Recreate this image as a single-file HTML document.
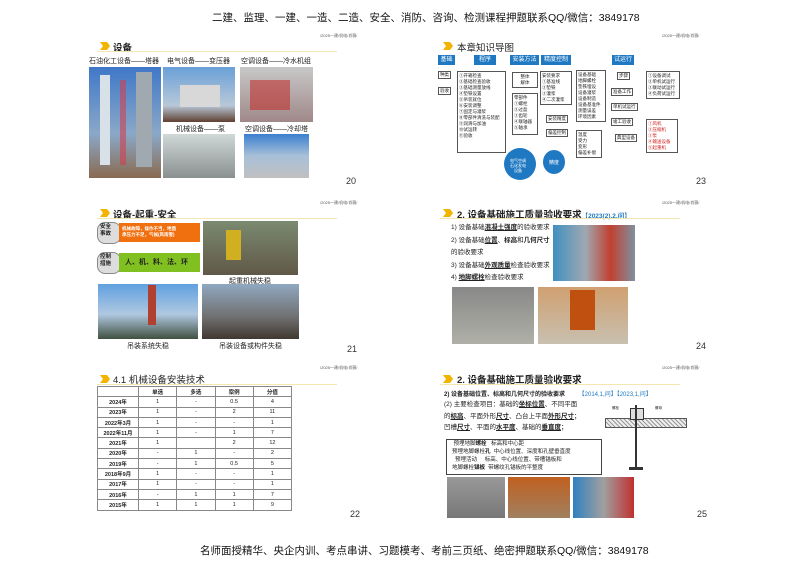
<!DOCTYPE html><html><head><meta charset="utf-8"><style>
body{margin:0;width:800px;height:566px;background:#fff;position:relative;overflow:hidden;font-family:"Liberation Sans","Noto Sans CJK SC",sans-serif;color:#222}
.a{position:absolute;white-space:nowrap}
.hd{font-size:4px;color:#555}
.t{font-size:9.5px;font-weight:bold;color:#222}
.chev{position:absolute;width:11px;height:8px}
.ln{position:absolute;height:1px;background:#f3e6b0}
.pg{font-size:9px;color:#333}
.ph{position:absolute}
.cap{font-size:7px;color:#222}
.bx{position:absolute;background:#1e78c2;color:#fff;font-size:6px;text-align:center;line-height:10px}
.sm{font-size:4.5px;line-height:6px}
table{border-collapse:collapse;font-size:5.5px}
td{border:1px solid #888;text-align:center;height:9.3px;padding:0}
td:first-child{font-weight:bold}
.s{font-size:6.5px;line-height:12.5px}
</style></head><body>
<svg width="0" height="0" style="position:absolute"><defs><g id="cv"><path d="M0 0L4 0L7 4L4 8L0 8L3 4Z M4 0L7 0L10 4L7 8L4 8L7 4Z" fill="#f2b400"/></g></defs></svg>
<div class="a" style="left:212px;top:10px;font-size:10.5px;color:#111">二建、监理、一建、一造、二造、安全、消防、咨询、检测课程押题联系QQ/微信：3849178</div>
<div class="a" style="left:200px;top:543px;font-size:10.5px;color:#111">名师面授精华、央企内训、考点串讲、习题模考、考前三页纸、绝密押题联系QQ/微信：3849178</div>

<!-- slide 20 -->
<div class="a hd" style="left:320px;top:33px">/2025一建/机电/肖薇/</div>
<svg class="chev" style="left:100px;top:42px" viewBox="0 0 11 8"><use href="#cv"/></svg>
<div class="a t" style="left:113px;top:40px">设备</div>
<div class="ln" style="left:97px;top:51px;width:240px"></div>
<div class="a cap" style="left:89px;top:56px">石油化工设备——塔器</div>
<div class="a cap" style="left:167px;top:56px">电气设备——变压器</div>
<div class="a cap" style="left:241px;top:56px">空调设备——冷水机组</div>
<div class="ph" style="left:89px;top:67px;width:72px;height:111px;background:linear-gradient(#3f78c8,#8aa8c8 60%,#8a6a50)"></div>
<div class="ph" style="left:100px;top:75px;width:10px;height:90px;background:#d8e0e8"></div>
<div class="ph" style="left:136px;top:72px;width:16px;height:95px;background:#a0a8b0"></div>
<div class="ph" style="left:120px;top:80px;width:6px;height:85px;background:#d04050;opacity:.6"></div>
<div class="ph" style="left:163px;top:67px;width:72px;height:55px;background:linear-gradient(#6aa0d8,#b8c8d8 70%,#604030)"></div>
<div class="ph" style="left:180px;top:85px;width:40px;height:22px;background:#d8d8d8"></div>
<div class="ph" style="left:240px;top:67px;width:73px;height:55px;background:linear-gradient(#c8c8c8,#a08888)"></div>
<div class="ph" style="left:250px;top:80px;width:40px;height:30px;background:#c03030;opacity:.6"></div>
<div class="a cap" style="left:176px;top:124px">机械设备——泵</div>
<div class="a cap" style="left:245px;top:124px">空调设备——冷却塔</div>
<div class="ph" style="left:163px;top:134px;width:72px;height:44px;background:linear-gradient(#d0d8d8,#8a9090)"></div>
<div class="ph" style="left:244px;top:134px;width:65px;height:44px;background:linear-gradient(#3a80d0,#a8c0d8 50%,#c0c0c0)"></div>
<div class="a pg" style="left:346px;top:176px">20</div>

<!-- slide 23 -->
<div class="a hd" style="left:662px;top:33px">/2025一建/机电/肖薇/</div>
<svg class="chev" style="left:443px;top:42px" viewBox="0 0 11 8"><use href="#cv"/></svg>
<div class="a t" style="left:457px;top:40px;font-weight:normal">本章知识导图</div>
<div class="bx" style="left:438px;top:55px;width:17px">基础</div>
<div class="bx" style="left:474px;top:55px;width:22px">程序</div>
<div class="bx" style="left:510px;top:55px;width:29px">安装方法</div>
<div class="bx" style="left:541px;top:55px;width:30px">精度控制</div>
<div class="bx" style="left:612px;top:55px;width:22px">试运行</div>
<div class="a sm" style="left:438px;top:71px;border:1px solid #555;padding:0 1px">种类</div>
<div class="a sm" style="left:438px;top:87px;border:1px solid #555;padding:0 1px">验收</div>
<div class="a sm" style="left:457px;top:71px;border:1px solid #555;padding:1px;width:45px;height:78px;white-space:normal">①开箱检查<br>②基础检查验收<br>③基础测量放线<br>④垫铁设置<br>⑤吊装就位<br>⑥安装调整<br>⑦固定与灌浆<br>⑧零部件清洗与装配<br>⑨润滑与加油<br>⑩试运转<br>⑪验收</div>
<div class="a sm" style="left:512px;top:72px;border:1px solid #555;padding:1px;width:22px;text-align:center">整体<br>解体</div>
<div class="a sm" style="left:512px;top:93px;border:1px solid #555;padding:1px;width:22px;height:38px">零部件<br>①螺栓<br>②过盈<br>③齿轮<br>④联轴器<br>⑤轴承</div>
<div class="a sm" style="left:540px;top:71px;border:1px solid #555;padding:1px;width:28px">安装要求<br>①基准线<br>②垫铁<br>③灌浆<br>④二次灌浆</div>
<div class="a sm" style="left:546px;top:115px;border:1px solid #555;padding:0 1px">安装精度</div>
<div class="a sm" style="left:546px;top:129px;border:1px solid #555;padding:0 1px">偏差控制</div>
<div class="a sm" style="left:576px;top:70px;border:1px solid #555;padding:1px;width:26px">设备基础<br>地脚螺栓<br>垫铁埋设<br>设备灌浆<br>设备制造<br>设备基准件<br>测量误差<br>环境因素</div>
<div class="a sm" style="left:576px;top:130px;border:1px solid #555;padding:1px;width:22px">温度<br>受力<br>变形<br>偏差补偿</div>
<div class="a sm" style="left:617px;top:72px;border:1px solid #555;padding:0 1px">步骤</div>
<div class="a sm" style="left:611px;top:88px;border:1px solid #555;padding:0 1px">准备工作</div>
<div class="a sm" style="left:611px;top:103px;border:1px solid #555;padding:0 1px">单机试运行</div>
<div class="a sm" style="left:611px;top:118px;border:1px solid #555;padding:0 1px">竣工验收</div>
<div class="a sm" style="left:615px;top:134px;border:1px solid #555;padding:0 1px">典型设备</div>
<div class="a sm" style="left:646px;top:71px;border:1px solid #555;padding:1px;width:30px">①设备调试<br>②单机试运行<br>③联动试运行<br>④负荷试运行</div>
<div class="a sm" style="left:646px;top:119px;border:1px solid #555;padding:1px;width:28px;color:#d02020">①风机<br>②压缩机<br>③泵<br>④输送设备<br>⑤起重机</div>
<div class="ph" style="left:504px;top:148px;width:32px;height:32px;border-radius:50%;background:#1e78c2"></div>
<div class="ph" style="left:543px;top:150px;width:22px;height:24px;border-radius:50%;background:#1e78c2"></div>
<div class="a" style="left:510px;top:158px;font-size:4px;color:#fff;line-height:5px;text-align:center">电气空调<br>石化发电<br>设备</div>
<div class="a" style="left:549px;top:159px;font-size:5px;color:#fff">精度</div>
<div class="a pg" style="left:696px;top:176px">23</div>

<!-- slide 21 -->
<div class="a hd" style="left:320px;top:200px">/2025一建/机电/肖薇/</div>
<svg class="chev" style="left:100px;top:209px" viewBox="0 0 11 8"><use href="#cv"/></svg>
<div class="a t" style="left:113px;top:207px">设备-起重-安全</div>
<div class="ln" style="left:97px;top:218px;width:240px"></div>
<div class="ph" style="left:97px;top:222px;width:22px;height:20px;border-radius:8px;background:#ddd;border:1px solid #888"></div>
<div class="a" style="left:100px;top:224px;font-size:5.5px;font-weight:bold;line-height:7px">安全<br>事故</div>
<div class="ph" style="left:119px;top:223px;width:81px;height:19px;background:#f07010"></div>
<div class="a" style="left:122px;top:226px;font-size:4.5px;color:#fff;line-height:6px;font-weight:bold">机械故障，操作不当，地面<br>承压力不足，气候(风雨雪)</div>
<div class="ph" style="left:97px;top:252px;width:22px;height:20px;border-radius:8px;background:#ddd;border:1px solid #888"></div>
<div class="a" style="left:100px;top:254px;font-size:5.5px;font-weight:bold;line-height:7px">控制<br>措施</div>
<div class="ph" style="left:119px;top:253px;width:81px;height:19px;background:#80c020"></div>
<div class="a" style="left:125px;top:257px;font-size:7px;font-weight:bold">人、机、料、法、环</div>
<div class="ph" style="left:203px;top:221px;width:95px;height:54px;background:linear-gradient(#7a8a70,#605848)"></div>
<div class="ph" style="left:226px;top:230px;width:15px;height:30px;background:#d0b020"></div>
<div class="a cap" style="left:229px;top:276px">起重机械失稳</div>
<div class="ph" style="left:98px;top:284px;width:100px;height:55px;background:linear-gradient(#60a0e0,#b0c8e0 55%,#405040)"></div>
<div class="ph" style="left:148px;top:285px;width:8px;height:40px;background:#b04030"></div>
<div class="ph" style="left:202px;top:284px;width:97px;height:55px;background:linear-gradient(#90a8c0,#707070 60%,#403830)"></div>
<div class="a cap" style="left:127px;top:341px">吊装系统失稳</div>
<div class="a cap" style="left:219px;top:341px">吊装设备或构件失稳</div>
<div class="a pg" style="left:347px;top:344px">21</div>

<!-- slide 24 -->
<div class="a hd" style="left:662px;top:200px">/2025一建/机电/肖薇/</div>
<svg class="chev" style="left:443px;top:209px" viewBox="0 0 11 8"><use href="#cv"/></svg>
<div class="a t" style="left:457px;top:207px">2. 设备基础施工质量验收要求<span style="color:#1e78c2;font-size:6.5px">【2023(2),2,问】</span></div>
<div class="ln" style="left:440px;top:218px;width:240px"></div>
<div class="a s" style="left:451px;top:222px">1) 设备基础<b><u>混凝土强度</u></b>的验收要求<br>2) 设备基础<b><u>位置</u></b>、<b>标高</b>和<b>几何尺寸</b><br>的验收要求<br>3) 设备基础<b><u>外观质量</u></b>检查验收要求<br>4) <b><u>地脚螺栓</u></b>检查验收要求</div>
<div class="ph" style="left:553px;top:225px;width:82px;height:56px;background:linear-gradient(90deg,#4090c0,#a0a8b0 40%,#c04030 70%,#8090a0)"></div>
<div class="ph" style="left:452px;top:287px;width:82px;height:57px;background:linear-gradient(#888,#b0b0a8)"></div>
<div class="ph" style="left:538px;top:287px;width:90px;height:57px;background:linear-gradient(#d0a070,#c8c0b0)"></div>
<div class="ph" style="left:570px;top:290px;width:25px;height:40px;background:#c05010"></div>
<div class="a pg" style="left:696px;top:341px">24</div>

<!-- slide 22 -->
<div class="a hd" style="left:320px;top:365px">/2025一建/机电/肖薇/</div>
<svg class="chev" style="left:100px;top:375px" viewBox="0 0 11 8"><use href="#cv"/></svg>
<div class="a t" style="left:113px;top:372px;font-weight:normal">4.1 机械设备安装技术</div>
<div class="ln" style="left:97px;top:384px;width:240px"></div>
<table class="a" style="left:97px;top:386px;width:195px">
<tr><td style="width:40px"></td><td><b>单选</b></td><td><b>多选</b></td><td><b>案例</b></td><td><b>分值</b></td></tr>
<tr><td>2024年</td><td>1</td><td>-</td><td>0.5</td><td>4</td></tr>
<tr><td>2023年</td><td>1</td><td>-</td><td>2</td><td>11</td></tr>
<tr><td>2022年3月</td><td>1</td><td>-</td><td>-</td><td>1</td></tr>
<tr><td>2022年11月</td><td>1</td><td>-</td><td>1</td><td>7</td></tr>
<tr><td>2021年</td><td>1</td><td></td><td>2</td><td>12</td></tr>
<tr><td>2020年</td><td>-</td><td>1</td><td>-</td><td>2</td></tr>
<tr><td>2019年</td><td>-</td><td>1</td><td>0.5</td><td>5</td></tr>
<tr><td>2018年9月</td><td>1</td><td>-</td><td>-</td><td>1</td></tr>
<tr><td>2017年</td><td>1</td><td>-</td><td>-</td><td>1</td></tr>
<tr><td>2016年</td><td>-</td><td>1</td><td>1</td><td>7</td></tr>
<tr><td>2015年</td><td>1</td><td>1</td><td>1</td><td>9</td></tr>
</table>
<div class="a pg" style="left:350px;top:509px">22</div>

<!-- slide 25 -->
<div class="a hd" style="left:662px;top:365px">/2025一建/机电/肖薇/</div>
<svg class="chev" style="left:443px;top:375px" viewBox="0 0 11 8"><use href="#cv"/></svg>
<div class="a t" style="left:457px;top:372px">2. 设备基础施工质量验收要求</div>
<div class="ln" style="left:440px;top:384px;width:240px"></div>
<div class="a" style="left:444px;top:389px;font-size:6px;font-weight:bold">2) 设备基础位置、标高和几何尺寸的验收要求 <span style="color:#1e78c2;font-weight:normal;margin-left:12px">【2014,1,问】【2023,1,问】</span></div>
<div class="a s" style="left:444px;top:399px;line-height:11.5px">(2) 主要检查项目：基础的<b><u>坐标位置</u></b>、不同平面<br>的<b><u>标高</u></b>、平面外形<b><u>尺寸</u></b>、凸台上平面<b><u>外形尺寸</u></b>；<br>凹槽<b><u>尺寸</u></b>、平面的<b><u>水平度</u></b>、基础的<b><u>垂直度</u></b>；</div>
<div class="ph" style="left:446px;top:439px;width:154px;height:34px;border:1px solid #444"></div>
<div class="a" style="left:452px;top:440px;font-size:5.5px;line-height:8px">&nbsp;预埋地脚<b>螺栓</b>&nbsp;&nbsp;&nbsp;标高和中心距<br>预埋地脚螺栓<b>孔</b>&nbsp;&nbsp;中心线位置、深度和孔壁垂直度<br>&nbsp;&nbsp;预埋活动&nbsp;&nbsp;&nbsp;&nbsp;&nbsp;标高、中心线位置、带槽锚板和<br>地脚螺栓<b>锚板</b>&nbsp;&nbsp;带螺纹孔锚板的平整度</div>
<div class="ph" style="left:605px;top:418px;width:80px;height:8px;background:repeating-linear-gradient(45deg,#999 0 1px,#eee 1px 3px);border:1px solid #555"></div>
<div class="ph" style="left:630px;top:408px;width:12px;height:10px;border:1px solid #333;background:#ddd"></div>
<div class="ph" style="left:635px;top:405px;width:2px;height:65px;background:#333"></div>
<div class="ph" style="left:629px;top:467px;width:14px;height:3px;background:#333"></div>
<div class="a" style="left:612px;top:406px;font-size:3.5px">螺栓</div>
<div class="a" style="left:655px;top:406px;font-size:3.5px">螺母</div>
<div class="ph" style="left:447px;top:477px;width:58px;height:41px;background:linear-gradient(#999,#777)"></div>
<div class="ph" style="left:508px;top:477px;width:62px;height:41px;background:linear-gradient(#c06020,#a08060)"></div>
<div class="ph" style="left:573px;top:477px;width:61px;height:41px;background:linear-gradient(90deg,#3080c0,#a0a0a0 50%,#c03030)"></div>
<div class="a pg" style="left:697px;top:509px">25</div>
</body></html>
